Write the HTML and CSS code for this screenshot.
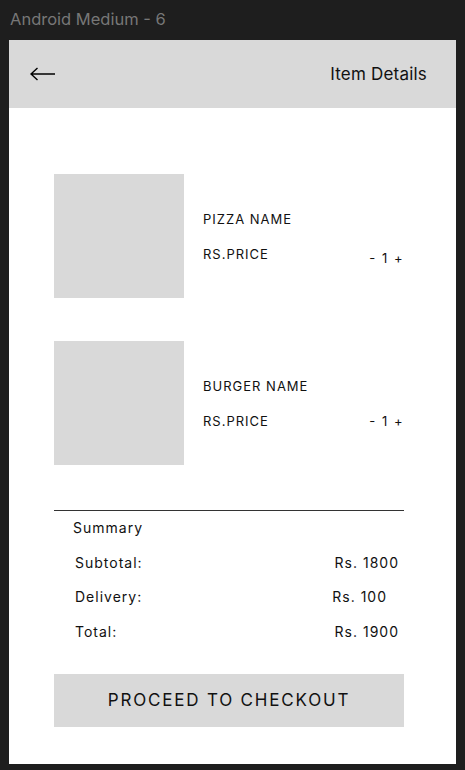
FILE: index.html
```html
<!DOCTYPE html>
<html lang="en">
<head>
  <meta charset="UTF-8">
  <title>Item Details</title>
  <link rel="stylesheet" href="styles.css">
</head>
<body>
  <div class="frame-label">Android Medium - 6</div>

  <div class="screen">
    <header class="topbar">
      <svg class="back" width="26" height="14" viewBox="0 0 26 14">
        <path d="M1 7H25M7.5 1L1 7L7.5 13" fill="none" stroke="#000" stroke-width="1.4"/>
      </svg>
      <span class="topbar-title">Item Details</span>
    </header>

    <main class="content">
      <div class="item">
        <div class="thumb"></div>
        <div class="info">
          <div class="name">PIZZA NAME</div>
          <div class="price-row">
            <span>RS.PRICE</span>
            <span class="qty low">- 1 +</span>
          </div>
        </div>
      </div>

      <div class="item">
        <div class="thumb"></div>
        <div class="info">
          <div class="name">BURGER NAME</div>
          <div class="price-row">
            <span>RS.PRICE</span>
            <span class="qty">- 1 +</span>
          </div>
        </div>
      </div>

      <section class="summary">
        <div class="summary-title">Summary</div>
        <div class="sum-row"><span>Subtotal:</span><span>Rs. 1800</span></div>
        <div class="sum-row"><span>Delivery:</span><span class="short">Rs. 100</span></div>
        <div class="sum-row"><span>Total:</span><span>Rs. 1900</span></div>
      </section>

      <button class="checkout">PROCEED TO CHECKOUT</button>
    </main>
  </div>
</body>
</html>
```

FILE: styles.css
```css
body {
  margin: 0;
  background-color: #1e1e1e;
  font-family: 'Inter', 'Noto Sans', sans-serif;
  color: #000;
}

.frame-label {
  height: 40px;
  padding-left: 10px;
  font-size: 16.5px;
  line-height: 38px;
  color: #777;
}

.screen {
  width: 447px;
  height: 724px;
  margin-left: 9px;
  background-color: #fff;
}

.topbar {
  height: 68px;
  display: flex;
  align-items: center;
  justify-content: space-between;
  padding: 0 29px 0 21px;
  background-color: #d9d9d9;
}

.back {
  display: block;
}

.topbar-title {
  font-size: 17px;
  letter-spacing: 0.2px;
  color: #111;
}

.content {
  width: 350px;
  padding: 66px 0 0 45px;
}

.item {
  display: flex;
  align-items: center;
  margin-bottom: 43px;
}

.thumb {
  width: 130px;
  height: 124px;
  background-color: #d9d9d9;
  flex-shrink: 0;
}

.info {
  flex: 1;
  margin-left: 19px;
  font-size: 13px;
  letter-spacing: 1px;
  color: #111;
}

.name {
  line-height: 16px;
  margin-bottom: 19px;
}

.price-row {
  display: flex;
  justify-content: space-between;
  line-height: 16px;
}

.qty {
  letter-spacing: 1.5px;
}

.qty.low {
  position: relative;
  top: 4px;
}

.summary {
  border-top: 1px solid #333;
  margin-top: 45px;
  font-size: 14px;
  letter-spacing: 1px;
  color: #111;
}

.summary-title {
  padding-left: 19px;
  line-height: 17px;
  margin-top: 8px;
}

.sum-row {
  display: flex;
  justify-content: space-between;
  padding: 0 5px 0 21px;
  line-height: 17px;
  margin-top: 17.5px;
}

.sum-row .short {
  margin-right: 12px;
}

.checkout {
  display: block;
  width: 350px;
  height: 53px;
  margin-top: 34px;
  border: none;
  background-color: #d9d9d9;
  font-family: inherit;
  font-size: 17px;
  letter-spacing: 1.8px;
  color: #111;
  padding: 0;
}
```
